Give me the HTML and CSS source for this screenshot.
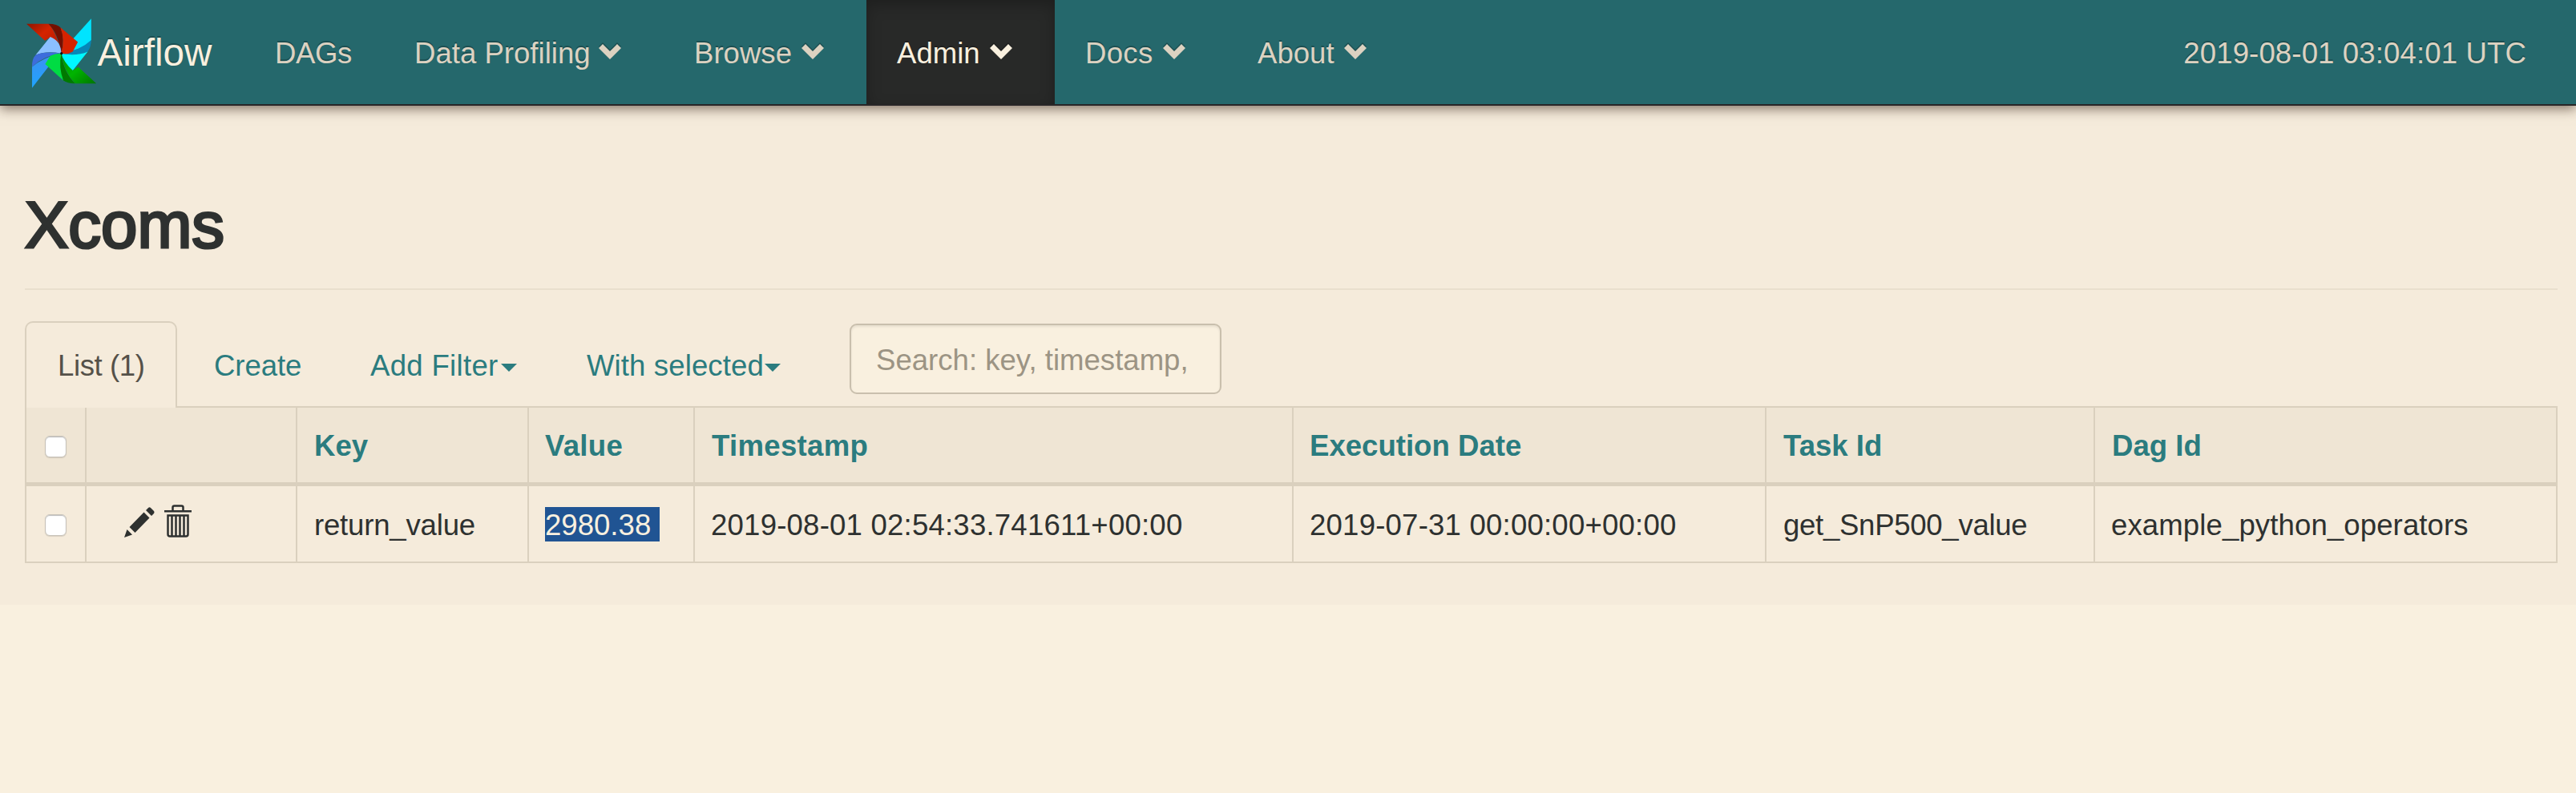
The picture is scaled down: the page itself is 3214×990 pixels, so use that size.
FILE: index.html
```html
<!DOCTYPE html>
<html lang="en">
<head>
<meta charset="utf-8">
<title>Airflow - Xcoms</title>
<link rel="stylesheet" href="styles.css">
</head>
<body>
<svg width="0" height="0" class="defs" aria-hidden="true">
  <symbol id="chev" viewBox="0 0 28 19"><path d="M5 0L14 9L23 0L28 5L14 19L0 5Z" fill="currentColor"/></symbol>
</svg>
<nav class="navbar">
  <a class="brand">
    <svg class="logo" viewBox="99 68 262 262">
      <defs>
        <linearGradient id="r1" x1="0" y1="0" x2="1" y2="1"><stop offset="0" stop-color="#8d1500"/><stop offset=".4" stop-color="#d52300"/><stop offset="1" stop-color="#a91a00"/></linearGradient>
        <linearGradient id="g1" x1="1" y1="1" x2="0" y2="0"><stop offset="0" stop-color="#007400"/><stop offset=".5" stop-color="#00b400"/><stop offset="1" stop-color="#008f00"/></linearGradient>
        <linearGradient id="b1" x1="0" y1="0" x2="0" y2="1"><stop offset="0" stop-color="#3f8df0"/><stop offset="1" stop-color="#1fa5ff"/></linearGradient>
      </defs>
      <path d="M341 69L341 149Q325 180 229 199L275 142Z" fill="#00e4ff"/>
      <path d="M341 149Q340 176 328 192Q290 212 229 199Q300 188 341 149Z" fill="#0787b8"/>
      <path d="M229 199Q285 210 328 192L272 263Q238 240 229 199Z" fill="#00f7ff"/>
      <path d="M99 88L181 88Q210 115 229 199L188 138L168 151Z" fill="url(#r1)"/>
      <path d="M181 88Q215 88 226 102Q244 145 229 199Q218 125 181 88Z" fill="#741000"/>
      <path d="M226 102L291 156L272 192Q252 204 229 199Q244 148 226 102Z" fill="#d62300"/>
      <path d="M188 137Q228 152 229 199Q175 188 133 205Z" fill="#8bc0ff"/>
      <path d="M229 199Q165 190 133 205Q119 220 120 249Q160 208 229 199Z" fill="#3d6ddc"/>
      <path d="M120 249Q160 214 229 199L183 246L120 328Z" fill="url(#b1)"/>
      <path d="M229 199Q225 250 237 300L169 239L188 208Q207 198 229 199Z" fill="#00dc43"/>
      <path d="M229 199Q238 270 281 311Q252 311 237 300Q218 250 229 199Z" fill="#007a00"/>
      <path d="M229 199Q237 230 272 263L292 249L360 311L281 311Q240 270 229 199Z" fill="url(#g1)"/>
      <circle cx="230" cy="199" r="5" fill="#111"/>
    </svg>
    <span class="brand-name">Airflow</span>
  </a>
  <ul class="menu">
    <li class="m-dags">DAGs</li>
    <li class="m-data">Data Profiling<svg class="chev"><use href="#chev"/></svg></li>
    <li class="m-browse">Browse<svg class="chev"><use href="#chev"/></svg></li>
    <li class="m-admin active">Admin<svg class="chev"><use href="#chev"/></svg></li>
    <li class="m-docs">Docs<svg class="chev"><use href="#chev"/></svg></li>
    <li class="m-about">About<svg class="chev"><use href="#chev"/></svg></li>
  </ul>
  <span class="clock">2019-08-01 03:04:01 UTC</span>
</nav>
<main class="container">
  <h1>Xcoms</h1>
  <hr>
  <ul class="tabs">
    <li class="tab current">List (1)</li>
    <li class="tab create">Create</li>
    <li class="tab filter">Add Filter<i class="caret"></i></li>
    <li class="tab selected">With selected<i class="caret"></i></li>
    <li class="search"><span>Search: key, timestamp,</span></li>
  </ul>
  <table>
    <colgroup><col class="c1"><col class="c2"><col class="c3"><col class="c4"><col class="c5"><col class="c6"><col class="c7"><col class="c8"></colgroup>
    <thead>
      <tr><th class="check"><i class="box"></i></th><th></th><th>Key</th><th class="value">Value</th><th class="time">Timestamp</th><th class="exec">Execution Date</th><th>Task Id</th><th>Dag Id</th></tr>
    </thead>
    <tbody>
      <tr>
        <td class="check"><i class="box"></i></td>
        <td class="tools"><div class="actions">
          <svg class="pencil" viewBox="0 0 38 38"><path d="M0 38L3.5 28L10 34.500ZM6.500 25L24.500 6.500L31.500 13.500L13.500 32ZM27 4L30 1Q31.500 -.5 33 1L37 5Q38 6.500 37 8L34 11Z" fill="currentColor"/></svg>
          <svg class="trash" viewBox="0 0 34 41"><path fill="none" stroke="currentColor" stroke-width="2.500" d="M0 8.200H34M10.500 8V3.500Q10.500 1.500 12.500 1.500H21.500Q23.500 1.500 23.500 3.500V8M4.500 13.500V37Q4.500 39.500 7 39.500H27Q29.500 39.500 29.500 37V13.500ZM9.500 14V39M14.500 14V39M19.500 14V39M24.500 14V39"/></svg>
        </div></td>
        <td class="key">return_value</td><td><span class="marked">2980.38 </span></td><td class="stamp">2019-08-01 02:54:33.741611+00:00</td><td class="stamp">2019-07-31 00:00:00+00:00</td><td class="task">get_SnP500_value</td><td class="dag">example_python_operators</td>
      </tr>
    </tbody>
  </table>
</main>
</body>
</html>
```
FILE: styles.css
```css
* { box-sizing: border-box; }
body {
  margin: 0;
  min-height: 990px;
  background: #f9f0df;
  color: #2e3130;
  font: 36.6px/52px "Liberation Sans", Arial, sans-serif;
}
ul { list-style: none; margin: 0; padding: 0; }
.defs { position: absolute; }

.navbar {
  position: relative;
  display: flex;
  height: 132px;
  background: #25686c;
  border-bottom: 2px solid #282627;
  box-shadow: 0 4px 14px rgba(40, 20, 10, .55);
  color: #dcd2c1;
  line-height: 133px;
  text-shadow: 0 -2px 0 rgba(0, 0, 0, .25);
  white-space: nowrap;
}
.brand { display: flex; width: 305px; padding-left: 33px; color: #f9f0df; }
.logo { width: 87.500px; height: 87.500px; margin: 22.500px 1px 0 0; flex: none; }
.brand-name { font-size: 47.600px; line-height: 131px; }
.menu { display: flex; }
.menu li { display: flex; height: 130px; padding-left: 38px; }
.m-dags { width: 174px; letter-spacing: -.4px; }
.m-data { width: 349px; }
.m-browse { width: 253px; }
.m-admin { width: 235px; }
.m-docs { width: 215px; letter-spacing: .3px; }
.m-about { width: 215px; }
.menu .active {
  background: #282928;
  color: #f9f0df;
  box-shadow: inset 0 6px 18px rgba(0, 0, 0, .25);
}
.chev { width: 28px; height: 19px; margin: 55px 0 0 12px; filter: drop-shadow(0 -2px 0 rgba(0, 0, 0, .25)); }
.m-data .chev { margin-left: 10px; }
.clock { margin-left: auto; padding-right: 62px; letter-spacing: .12px; }

.container { height: 623px; padding: 100px 23px 0 31px; background: #f5ebdb; }
h1 {
  margin: 0;
  height: 128px;
  font-size: 81.500px;
  font-weight: 400;
  line-height: 97px;
  -webkit-text-stroke: 3.200px #2e3130;
}
hr { height: 2px; margin: 0; border: 0; background: #e9dfcd; }

.tabs { display: flex; height: 147px; padding-top: 39px; border-bottom: 2px solid #dad0be; color: #2b7c7f; white-space: nowrap; }
.tab { display: flex; height: 108px; line-height: 112px; }
.current {
  width: 190px;
  padding-left: 39px;
  background: #f5ebdb;
  border: 2px solid #dad0be;
  border-bottom: 0;
  border-radius: 10px 10px 0 0;
  color: #555149;
  line-height: 108px;
  letter-spacing: -.4px;
}
.create { width: 195px; padding: 0 0 0 46px; letter-spacing: -.1px; }
.filter { width: 272px; padding-left: 46px; letter-spacing: .3px; }
.selected { width: 372px; padding-left: 44px; letter-spacing: .1px; }
.caret { margin: 53px 0 0 3px; width: 20px; height: 10px; border: 10px solid transparent; border-top-color: #2b7c7f; border-bottom: 0; }
.selected .caret { margin-left: 1px; }
.search {
  width: 464px;
  height: 88px;
  margin-top: 3px;
  padding-left: 31px;
  background: #f9f0df;
  border: 2px solid #c9bfad;
  border-radius: 9px;
  box-shadow: inset 0 2px 3px rgba(0, 0, 0, .08);
  color: #9c9484;
  line-height: 87px;
}

table { width: 3160px; table-layout: fixed; border-collapse: separate; border-spacing: 0; border-left: 2px solid #dad0be; }
.c1 { width: 75px; }
.c2 { width: 263px; }
.c3 { width: 289px; }
.c4 { width: 207px; }
.c5 { width: 747px; }
.c6 { width: 590px; }
.c7 { width: 410px; }
.c8 { width: 577px; }
th, td { padding: 3px 0 0 20px; border-right: 2px solid #dad0be; text-align: left; white-space: nowrap; }
th { height: 98px; padding-left: 21px; background: #efe5d4; border-bottom: 5px solid #dad0be; color: #2b7c7f; }
td { height: 96px; background: #f5ebdb; border-bottom: 2px solid #dad0be; }
.exec { padding-left: 20px; }
.value { padding-left: 20px; letter-spacing: .3px; }
.time { letter-spacing: .3px; }
.key { padding-left: 21px; letter-spacing: -.2px; }
.stamp { letter-spacing: .2px; }
.task { padding-left: 21px; letter-spacing: -.3px; }
.dag { letter-spacing: .1px; }
.check { padding-left: 23px; }
.box { display: block; width: 27px; height: 27px; border: 1px solid #c9c4bb; border-radius: 6px; background: #fff; box-shadow: inset 0 1px 1px #bbb, 0 1px 1px rgba(0, 0, 0, .12); }
.marked { display: block; width: 143px; height: 43px; margin-top: -2px; background: #205493; color: #f9f0df; line-height: 46px; }
.tools { padding: 0 0 7px 20px; }
.actions { display: flex; padding-left: 27px; }
.pencil { width: 38px; height: 38px; margin: 3px 12px 0 0; }
.trash { width: 34px; height: 41px; }
```
